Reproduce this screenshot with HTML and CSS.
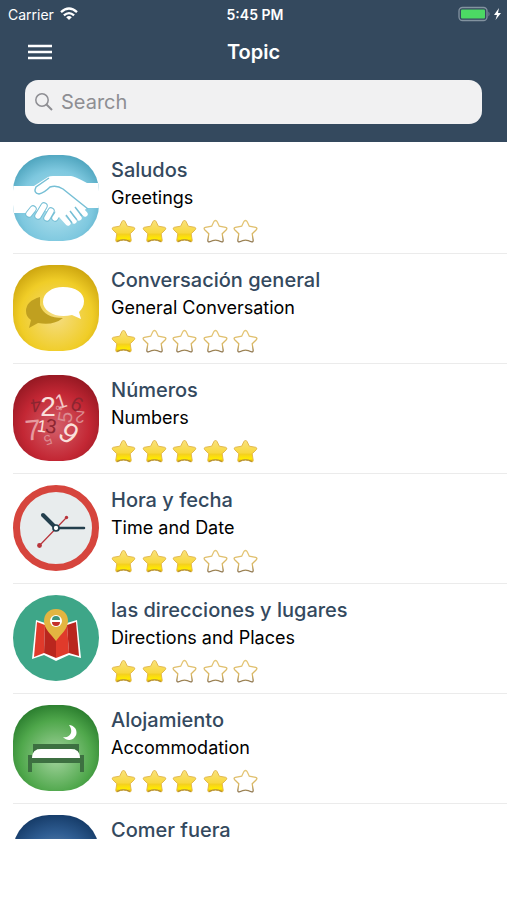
FILE: index.html
```html
<!DOCTYPE html>
<html lang="en">
<head>
  <meta charset="UTF-8">
  <meta name="viewport" content="width=device-width, initial-scale=1.0">
  <title>Topic</title>
  <link rel="stylesheet" href="styles.css">
</head>
<body>
  <!-- shared shapes and gradients -->
  <svg class="defs" aria-hidden="true">
    <defs>
      <linearGradient id="gold" x1="0" y1="0" x2="0" y2="1">
        <stop offset="0" stop-color="#f9e27c"/>
        <stop offset="0.58" stop-color="#f8d83f"/>
        <stop offset="0.64" stop-color="#f5d020"/>
        <stop offset="0.85" stop-color="#ffea00"/>
        <stop offset="1" stop-color="#e0a70c"/>
      </linearGradient>
      <linearGradient id="rim" x1="0" y1="0" x2="0" y2="1">
        <stop offset="0" stop-color="#e6c878"/>
        <stop offset="0.7" stop-color="#d8b560"/>
        <stop offset="1" stop-color="#8d7550"/>
      </linearGradient>
      <radialGradient id="blue" cy="0.6" r="0.65">
        <stop offset="0" stop-color="#b5e3ef"/>
        <stop offset="0.65" stop-color="#7ec8df"/>
        <stop offset="1" stop-color="#479fb9"/>
      </radialGradient>
      <radialGradient id="yellow" cy="0.6" r="0.65">
        <stop offset="0" stop-color="#f5dd83"/>
        <stop offset="0.65" stop-color="#f0cd27"/>
        <stop offset="1" stop-color="#c79f0c"/>
      </radialGradient>
      <radialGradient id="red" cy="0.6" r="0.65">
        <stop offset="0" stop-color="#d4606a"/>
        <stop offset="0.6" stop-color="#c32734"/>
        <stop offset="1" stop-color="#8f1620"/>
      </radialGradient>
      <radialGradient id="green" cy="0.6" r="0.65">
        <stop offset="0" stop-color="#a5d5a0"/>
        <stop offset="0.65" stop-color="#4fa74b"/>
        <stop offset="1" stop-color="#25772a"/>
      </radialGradient>
      <radialGradient id="navy" cy="0.6" r="0.65">
        <stop offset="0" stop-color="#7d9cc0"/>
        <stop offset="0.6" stop-color="#2f5d92"/>
        <stop offset="1" stop-color="#123763"/>
      </radialGradient>
      <rect id="tile" width="86" height="86" rx="36"/>
      <clipPath id="tile-clip"><use href="#tile"/></clipPath>
      <path id="star-shape" d="M12.500 1.500Q13.600 1.500 14.200 2.800L16.300 7.200L22.600 8.300Q24.800 9 23.300 10.700L19.200 14.800L20.200 21.300Q20.200 23.500 18.200 22.700Q12.500 19.500 6.800 22.700Q4.800 23.500 4.800 21.300L5.800 14.800L1.700 10.700Q.2 9 2.400 8.300L8.700 7.200L10.800 2.800Q11.400 1.500 12.500 1.500Z"/>
      <symbol id="on" viewBox="0 0 25 25">
        <use href="#star-shape" fill="url(#gold)" stroke="#e3b94e"/>
        <path d="M6 22.500Q12.500 19 19 22.500" fill="none" stroke="#a98a3c"/>
      </symbol>
      <symbol id="off" viewBox="0 0 25 25">
        <use href="#star-shape" fill="#fff" stroke="url(#rim)" stroke-width="1.300"/>
      </symbol>
    </defs>
  </svg>

  <header class="header">
    <div class="status">
      <div class="carrier">
        <span>Carrier</span>
        <svg width="18" height="14" viewBox="0 0 18 14" fill="none" stroke="#fff" stroke-width="2.300" aria-hidden="true">
          <path d="M1 5.200Q9-2.200 17 5.200M3.900 8.400Q9 3.800 14.100 8.400"/>
          <path d="M6.200 10.200Q9 7.800 11.800 10.200L9 13Z" fill="#fff" stroke="none"/>
        </svg>
      </div>
      <span class="time">5:45 PM</span>
      <div class="battery">
        <svg width="44" height="16" viewBox="0 0 44 16" aria-hidden="true">
          <rect x="1" y="1.500" width="28" height="13" rx="3.500" fill="none" stroke="#8393a0" stroke-width="1.300"/>
          <rect x="3" y="3.500" width="24" height="9" rx="1" fill="#4cd964"/>
          <path d="M30.500 5.500Q32.500 8 30.500 10.500Z" fill="#8393a0"/>
          <path d="M41 2L36 9H39L37.500 14L43 7H40Z" fill="#fff"/>
        </svg>
      </div>
    </div>
    <div class="navbar">
      <button class="menu" type="button" aria-label="Menu">
        <svg width="26" height="18" viewBox="0 0 26 18" stroke="#fff" stroke-width="2.400" aria-hidden="true">
          <path d="M1 3H25M1 9H25M1 15H25"/>
        </svg>
      </button>
      <h1>Topic</h1>
    </div>
    <label class="search">
      <svg width="20" height="20" viewBox="0 0 20 20" fill="none" stroke="#8e8e93" stroke-width="1.500" aria-hidden="true">
        <circle cx="8" cy="8" r="6.200"/>
        <path d="M12.500 12.500L18 18" stroke-width="2"/>
      </svg>
      <input type="search" placeholder="Search" aria-label="Search">
    </label>
  </header>

  <main class="list">
    <a class="row" href="#saludos">
      <svg class="icon" viewBox="0 0 86 86" aria-hidden="true">
        <use href="#tile" fill="url(#blue)"/>
        <g clip-path="url(#tile-clip)">
          <path d="M0 31L21 31L35 22Q37 21 40 21H58Q61 21 74 28H86V53H74L66 60L50 61L30 55L14 58H0Z" fill="#fff"/>
          <!-- fingers -->
          <g stroke="#76bfd5" stroke-width="7.400" stroke-linecap="round">
            <path d="M16 59L20 54M25 61L31 51M34 63L38 56M42 63L44 60"/>
          </g>
          <g stroke="#fff" stroke-width="5.400" stroke-linecap="round">
            <path d="M16 59L20 54M25 61L31 51M34 63L38 56M42 63L44 60"/>
            <path d="M60 46L72 59M55 50L66 63M50 54L61 66M45 57L55 68"/>
          </g>
          <path d="M36 23L23 32Q20 38 26 39Q31 38 37 32Q44 30 50 34L75 54M62 52L69 61M57 56L64 65M53 60L59 68" fill="none" stroke="#76bfd5" stroke-width="1.500"/>
        </g>
      </svg>
      <div class="info">
        <h2>Saludos</h2>
        <p>Greetings</p>
        <div class="stars" role="img" aria-label="3 of 5">
          <svg><use href="#on"/></svg><svg><use href="#on"/></svg><svg><use href="#on"/></svg><svg><use href="#off"/></svg><svg><use href="#off"/></svg>
        </div>
      </div>
    </a>

    <a class="row" href="#conversacion">
      <svg class="icon" viewBox="0 0 86 86" aria-hidden="true">
        <use href="#tile" fill="url(#yellow)"/>
        <path d="M27 32Q13 36 13 46Q13 52 18 55L16 63L25 58Q40 61 50 53Q31 53 27 40Z" fill="#c0a020"/>
        <path d="M50 22C63 22 71 28 71 36C71 41 69 44 66 47L68 54L59 50C43 54 30 46 30 37C30 28 39 22 50 22Z" fill="#fff"/>
      </svg>
      <div class="info">
        <h2>Conversación general</h2>
        <p>General Conversation</p>
        <div class="stars" role="img" aria-label="1 of 5">
          <svg><use href="#on"/></svg><svg><use href="#off"/></svg><svg><use href="#off"/></svg><svg><use href="#off"/></svg><svg><use href="#off"/></svg>
        </div>
      </div>
    </a>

    <a class="row" href="#numeros">
      <svg class="icon" viewBox="0 0 86 86" aria-hidden="true">
        <use href="#tile" fill="url(#red)"/>
        <g class="digits">
          <text transform="translate(23 31) rotate(172)" y="7" font-size="19" fill="#8c2530">4</text>
          <text transform="translate(35 31)" y="10" font-size="28" fill="#fae0db">2</text>
          <text transform="translate(48 26) rotate(-18)" y="7" font-size="20" fill="#f4c9c8">1</text>
          <text transform="translate(64 29) rotate(25)" y="7" font-size="20" fill="#8c2530">6</text>
          <text transform="translate(46 33) rotate(100)" y="3" font-size="9" fill="#e5a0a5">8</text>
          <text transform="translate(52 42) rotate(-80)" y="7" font-size="20" fill="#dc8b91">5</text>
          <text transform="translate(67 42) rotate(185)" y="6" font-size="17" fill="#dc8b91">2</text>
          <text transform="translate(20 55) rotate(-5)" y="10" font-size="29" fill="#e69a9f">7</text>
          <text transform="translate(29 51) rotate(8)" y="6" font-size="17" fill="#fae0db">1</text>
          <text transform="translate(38 51) rotate(8)" y="7" font-size="20" fill="#8c2530">3</text>
          <text transform="translate(56 58) rotate(38)" y="10" font-size="29" fill="#fae0db">9</text>
          <text transform="translate(35 65) rotate(160)" y="5" font-size="14" fill="#dc8b91">5</text>
        </g>
      </svg>
      <div class="info">
        <h2>Números</h2>
        <p>Numbers</p>
        <div class="stars" role="img" aria-label="5 of 5">
          <svg><use href="#on"/></svg><svg><use href="#on"/></svg><svg><use href="#on"/></svg><svg><use href="#on"/></svg><svg><use href="#on"/></svg>
        </div>
      </div>
    </a>

    <a class="row" href="#hora">
      <svg class="icon" viewBox="0 0 86 86" aria-hidden="true">
        <circle cx="43" cy="43" r="39.500" fill="#e8eced" stroke="#d6453d" stroke-width="7"/>
        <g stroke-linecap="round">
          <path d="M30 30L43 43" stroke="#233f4d" stroke-width="4"/>
          <path d="M43 43H71" stroke="#233f4d" stroke-width="2.500"/>
          <path d="M27 60L53 33" stroke="#b8343b" stroke-width="1.200"/>
        </g>
        <circle cx="26.500" cy="60.500" r="2.400" fill="#b8343b"/>
        <circle cx="53.500" cy="32.500" r="1.700" fill="#b8343b"/>
        <circle cx="43" cy="43" r="3" fill="#fff" stroke="#233f4d" stroke-width="1.700"/>
      </svg>
      <div class="info">
        <h2>Hora y fecha</h2>
        <p>Time and Date</p>
        <div class="stars" role="img" aria-label="3 of 5">
          <svg><use href="#on"/></svg><svg><use href="#on"/></svg><svg><use href="#on"/></svg><svg><use href="#off"/></svg><svg><use href="#off"/></svg>
        </div>
      </div>
    </a>

    <a class="row" href="#direcciones">
      <svg class="icon" viewBox="0 0 86 86" aria-hidden="true">
        <circle cx="43" cy="43" r="43" fill="#3ea688"/>
        <path d="M23 25L32 28L43 24L54 28L64 25L68 63L56 60L43 66L31 60L19 64Z" fill="#fff"/>
        <path d="M24 27L32 30L31 58L21 62Z" fill="#e03a2b"/>
        <path d="M32 30L43 26V63L31 58Z" fill="#b9261e"/>
        <path d="M43 26L54 30L56 58L43 63Z" fill="#e03a2b"/>
        <path d="M54 30L63 27L66 61L56 58Z" fill="#b9261e"/>
        <path d="M43 14C51 14 55 20 55 26C55 34 48 39 43 46C38 39 31 34 31 26C31 20 35 14 43 14Z" fill="#e3b541"/>
        <circle cx="43" cy="26" r="6" fill="#fff"/>
        <path d="M39 25A4 4 0 0 1 47 25Z" fill="#3e947c"/>
        <path d="M39 27A4 4 0 0 0 47 27Z" fill="#c4302b"/>
      </svg>
      <div class="info">
        <h2>las direcciones y lugares</h2>
        <p>Directions and Places</p>
        <div class="stars" role="img" aria-label="2 of 5">
          <svg><use href="#on"/></svg><svg><use href="#on"/></svg><svg><use href="#off"/></svg><svg><use href="#off"/></svg><svg><use href="#off"/></svg>
        </div>
      </div>
    </a>

    <a class="row" href="#alojamiento">
      <svg class="icon" viewBox="0 0 86 86" aria-hidden="true">
        <use href="#tile" fill="url(#green)"/>
        <path d="M56 20A7.500 7.500 0 1 1 50 32Q56 33 58 28Q59 24 56 20Z" fill="#fff"/>
        <path d="M20 39H66V50H62V44H24V50H20Z" fill="#3d7041"/>
        <path d="M19 53Q19 44 28 44H58Q67 44 67 53Z" fill="#fff"/>
        <path d="M15 50H19V53H67V50H71V67H67V58H19V67H15Z" fill="#3d7041"/>
      </svg>
      <div class="info">
        <h2>Alojamiento</h2>
        <p>Accommodation</p>
        <div class="stars" role="img" aria-label="4 of 5">
          <svg><use href="#on"/></svg><svg><use href="#on"/></svg><svg><use href="#on"/></svg><svg><use href="#on"/></svg><svg><use href="#off"/></svg>
        </div>
      </div>
    </a>

    <a class="row" href="#comer">
      <svg class="icon" viewBox="0 0 86 86" aria-hidden="true">
        <use href="#tile" fill="url(#navy)"/>
      </svg>
      <div class="info">
        <h2>Comer fuera</h2>
      </div>
    </a>
  </main>
</body>
</html>
```

FILE: styles.css
```css
* {
  box-sizing: border-box;
}

body {
  display: flex;
  flex-direction: column;
  height: 100vh;
  margin: 0;
  padding-bottom: 61px;
  background: #fff;
  font-family: Inter, "Liberation Sans", sans-serif;
}

.defs {
  position: absolute;
  width: 0;
  height: 0;
}

.header {
  flex: none;
  padding-bottom: 18px;
  background: #34495e;
  color: #fff;
}

.status {
  display: grid;
  grid-template-columns: 1fr auto 1fr;
  align-items: center;
  height: 28px;
  padding: 0 5px 0 8px;
  font-size: 14px;
}

.carrier {
  display: flex;
  align-items: center;
  gap: 6px;
}

.time {
  font-weight: 600;
}

.battery {
  display: flex;
  justify-content: flex-end;
}

.navbar {
  display: grid;
  grid-template-columns: 1fr auto 1fr;
  align-items: center;
  height: 48px;
  padding: 0 27px;
}

.menu {
  display: flex;
  justify-self: start;
  padding: 0;
  background: none;
  border: none;
  cursor: pointer;
}

h1 {
  margin: 0;
  font-size: 20px;
  font-weight: 600;
}

.search {
  display: flex;
  align-items: center;
  gap: 7px;
  height: 44px;
  margin: 4px 25px 0;
  padding: 0 9px;
  background: #f1f1f2;
  border-radius: 13px;
}

.search input {
  flex: 1;
  min-width: 0;
  padding: 0;
  background: none;
  border: none;
  outline: none;
  font-family: inherit;
  font-size: 20px;
}

.search input::placeholder {
  color: #8e8e93;
}

.list {
  flex: 1;
  min-height: 0;
  padding-top: 2px;
  overflow: hidden;
}

.row {
  display: flex;
  gap: 12px;
  height: 110px;
  margin-left: 13px;
  padding-top: 11px;
  border-bottom: 1px solid #ebebeb;
  color: #000;
  text-decoration: none;
}

.icon {
  flex: none;
  width: 86px;
  height: 86px;
}

.digits {
  font-family: "Liberation Sans", sans-serif;
  text-anchor: middle;
}

h2 {
  margin: 0;
  color: #34495e;
  font-size: 20px;
  font-weight: 500;
  line-height: 30px;
}

p {
  margin: 0;
  font-size: 18px;
  line-height: 26px;
}

.stars {
  display: flex;
  justify-content: space-between;
  width: 147px;
  margin-top: 8px;
}

.stars svg {
  width: 25px;
  height: 25px;
}
```
